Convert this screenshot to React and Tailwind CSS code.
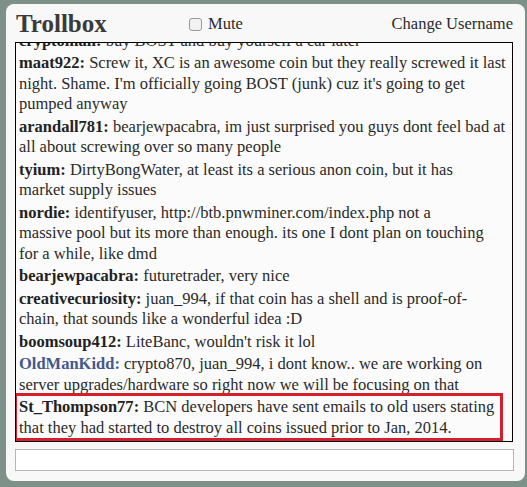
import React from "react";

// lines are broken where the reference breaks them
const messages = [
  { user: "cryptoman", lines: ["buy BOST and buy yourself a car later"] },
  {
    user: "maat922",
    lines: [
      "Screw it, XC is an awesome coin but they really screwed it last",
      "night. Shame. I'm officially going BOST (junk) cuz it's going to get",
      "pumped anyway",
    ],
  },
  {
    user: "arandall781",
    lines: [
      "bearjewpacabra, im just surprised you guys dont feel bad at",
      "all about screwing over so many people",
    ],
  },
  {
    user: "tyium",
    lines: [
      "DirtyBongWater, at least its a serious anon coin, but it has",
      "market supply issues",
    ],
  },
  {
    user: "nordie",
    lines: [
      "identifyuser, http://btb.pnwminer.com/index.php not a",
      "massive pool but its more than enough. its one I dont plan on touching",
      "for a while, like dmd",
    ],
  },
  { user: "bearjewpacabra", lines: ["futuretrader, very nice"] },
  {
    user: "creativecuriosity",
    lines: [
      "juan_994, if that coin has a shell and is proof-of-",
      "chain, that sounds like a wonderful idea :D",
    ],
  },
  { user: "boomsoup412", lines: ["LiteBanc, wouldn't risk it lol"] },
  {
    user: "OldManKidd",
    mod: true,
    lines: [
      "crypto870, juan_994, i dont know.. we are working on",
      "server upgrades/hardware so right now we will be focusing on that",
    ],
  },
  {
    user: "St_Thompson77",
    marked: true,
    lines: [
      "BCN developers have sent emails to old users stating",
      "that they had started to destroy all coins issued prior to Jan, 2014.",
    ],
  },
];

function Message({ user, lines, mod, marked }) {
  return (
    <div className="relative mb-[1.8px] leading-[20.6px] whitespace-nowrap">
      {lines.map((line, i) => (
        <div key={i}>
          {i === 0 && (
            <>
              <span className={mod ? "font-bold text-[#43598c]" : "font-bold text-[#222]"}>
                {user}:
              </span>{" "}
            </>
          )}
          {line}
        </div>
      ))}
      {marked && (
        <div className="absolute -left-[5px] right-[9px] -top-[4px] -bottom-[3px] border-[3px] border-[#d4202c] pointer-events-none" />
      )}
    </div>
  );
}

export default function App() {
  return (
    <div
      className="w-[527px] h-[487px] bg-[#7d9188] pt-[4px] pl-[6px]"
      style={{ fontFamily: '"Liberation Serif", serif' }}
    >
      <div className="w-[519px] h-[477px] rounded-[8px] bg-[#f8f8f8] px-[9px] flex flex-col text-[#2a2a2a]">
        <div className="flex items-center pt-[5px] pb-[3px]">
          <div className="font-bold text-[25px] leading-[30px] text-[#3a3a3a] pl-[1px] w-[174px]">
            Trollbox
          </div>
          <label className="flex items-center gap-[6px] text-[16.5px] leading-[22px]">
            <input
              type="checkbox"
              className="w-[13px] h-[13px] rounded-[3px] border border-[#999] appearance-none bg-[#f2f2f2]"
            />
            Mute
          </label>
          <div className="ml-auto text-[16.5px] leading-[22px] pr-[3px]">Change Username</div>
        </div>
        <div className="w-[498px] h-[400px] border border-black bg-[#fbfbfb] overflow-hidden flex flex-col justify-end pl-[3px] pb-[1px] text-[16.5px]">
          {messages.map((m) => (
            <Message key={m.user} {...m} />
          ))}
        </div>
        <div className="mt-[7px] w-[499px] h-[22px] border border-[#b5b5b5] bg-white" />
      </div>
    </div>
  );
}
